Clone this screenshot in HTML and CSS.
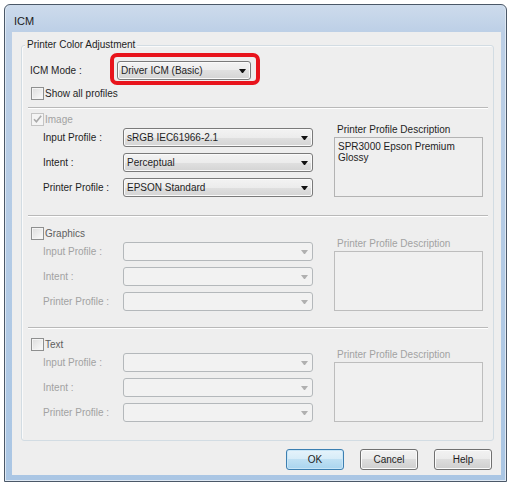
FILE: index.html
```html
<!DOCTYPE html>
<html lang="en">
<head>
    <meta charset="UTF-8">
    <title>ICM</title>
    <link rel="stylesheet" href="styles.css">
</head>
<body>
    <div class="window">
        <div class="titlebar">ICM</div>

        <div class="client">
            <div class="group">
                <span class="group-title">Printer Color Adjustment</span>

                <!-- Mode selector -->
                <div class="mode-row">
                    <span class="mode-label">ICM Mode :</span>
                    <span class="highlight">
                        <div class="combo mode-combo">Driver ICM (Basic)</div>
                    </span>
                </div>
                <div class="check-row">
                    <span class="check"></span>
                    <span>Show all profiles</span>
                </div>

                <div class="separator"></div>

                <!-- Image -->
                <div class="section section-image">
                    <div class="section-main">
                        <div class="check-row muted">
                            <span class="check check-disabled">
                                <svg width="11" height="11" viewBox="0 0 11 11"><path d="M2 5.2 L4.4 7.8 L9.2 1.8" fill="none" stroke="#a9a9a9" stroke-width="1.6"/></svg>
                            </span>
                            <span>Image</span>
                        </div>
                        <div class="field-row">
                            <span class="field-label">Input Profile :</span>
                            <div class="combo field-combo">sRGB IEC61966-2.1</div>
                        </div>
                        <div class="field-row">
                            <span class="field-label">Intent :</span>
                            <div class="combo field-combo">Perceptual</div>
                        </div>
                        <div class="field-row">
                            <span class="field-label">Printer Profile :</span>
                            <div class="combo field-combo">EPSON Standard</div>
                        </div>
                    </div>
                    <div class="desc">
                        <div class="desc-label">Printer Profile Description</div>
                        <div class="desc-box">SPR3000 Epson Premium<br>Glossy</div>
                    </div>
                </div>

                <div class="separator"></div>

                <!-- Graphics -->
                <div class="section section-graphics disabled">
                    <div class="section-main">
                        <div class="check-row">
                            <span class="check"></span>
                            <span class="head-label">Graphics</span>
                        </div>
                        <div class="field-row">
                            <span class="field-label">Input Profile :</span>
                            <div class="combo field-combo"></div>
                        </div>
                        <div class="field-row">
                            <span class="field-label">Intent :</span>
                            <div class="combo field-combo"></div>
                        </div>
                        <div class="field-row">
                            <span class="field-label">Printer Profile :</span>
                            <div class="combo field-combo"></div>
                        </div>
                    </div>
                    <div class="desc">
                        <div class="desc-label">Printer Profile Description</div>
                        <div class="desc-box"></div>
                    </div>
                </div>

                <div class="separator"></div>

                <!-- Text -->
                <div class="section section-text disabled">
                    <div class="section-main">
                        <div class="check-row">
                            <span class="check"></span>
                            <span class="head-label">Text</span>
                        </div>
                        <div class="field-row">
                            <span class="field-label">Input Profile :</span>
                            <div class="combo field-combo"></div>
                        </div>
                        <div class="field-row">
                            <span class="field-label">Intent :</span>
                            <div class="combo field-combo"></div>
                        </div>
                        <div class="field-row">
                            <span class="field-label">Printer Profile :</span>
                            <div class="combo field-combo"></div>
                        </div>
                    </div>
                    <div class="desc">
                        <div class="desc-label">Printer Profile Description</div>
                        <div class="desc-box"></div>
                    </div>
                </div>
            </div>

            <div class="buttons">
                <button class="btn btn-default">OK</button>
                <button class="btn">Cancel</button>
                <button class="btn">Help</button>
            </div>
        </div>
    </div>
</body>
</html>
```

FILE: styles.css
```css
body {
    margin: 0;
    background: #fff;
    font-family: "Liberation Sans", Arial, sans-serif;
    font-size: 10px;
    color: #1e1e1e;
}
.window {
    box-sizing: border-box;
    width: 503px;
    height: 478px;
    margin: 4px 0 0 4px;
    padding: 0 5px 6px 7px;
    border: 1px solid #4b5868;
    border-radius: 6px 6px 0 0;
    background: linear-gradient(to bottom, #cddbec 0, #bccfe6 28px, #aac6e4 100%);
    box-shadow: inset 1px 0 0 #dfe9f4, inset -1px 0 0 #dfe9f4, inset 0 -1px 0 #dfe9f4;
}
.titlebar {
    box-sizing: border-box;
    height: 27px;
    padding: 5px 0 0 2px;
    font-size: 11px;
    line-height: 22px;
    color: #1b1b1b;
}
.client {
    box-sizing: border-box;
    width: 489px;
    height: 443px;
    padding: 13px 7px 0 9px;
    background: #eeeeee;
}
.group {
    position: relative;
    padding: 15px 6px 0 8px;
    border: 1px solid #d2dce3;
    border-radius: 3px;
    box-shadow: inset 1px 1px 0 #fafafa;
}
.group-title {
    position: absolute;
    top: -7px;
    left: 3px;
    padding: 0 2px;
    line-height: 12px;
    background: #eeeeee;
}
.mode-row {
    display: flex;
    align-items: center;
    height: 19px;
}
.mode-label {
    width: 87px;
}
.highlight {
    position: relative;
}
.highlight::after {
    content: "";
    position: absolute;
    top: -8px;
    left: -7px;
    right: -9px;
    bottom: -5px;
    border: 4px solid #e8141c;
    border-radius: 7px;
}
.combo {
    position: relative;
    box-sizing: border-box;
    height: 19px;
    padding-left: 3px;
    border: 1px solid #7a7a7a;
    border-radius: 3px;
    line-height: 17px;
    background: linear-gradient(#f3f3f3, #ececec 50%, #e0e0e0 50%, #d4d4d4);
    box-shadow: inset 0 0 0 1px #fafafa;
}
.combo::after {
    content: "";
    position: absolute;
    right: 4px;
    top: 7px;
    width: 1px;
    border-top: 4px solid #111;
    border-left: 3px solid transparent;
    border-right: 3px solid transparent;
}
.mode-combo {
    width: 134px;
}
.field-combo {
    width: 190px;
}
.check-row {
    display: flex;
    align-items: center;
    height: 13px;
    margin-top: 7px;
}
.section .check-row {
    margin-top: 0;
}
.check {
    box-sizing: border-box;
    width: 13px;
    height: 13px;
    margin: 0 1px;
    border: 1px solid #8e8f8f;
    background: linear-gradient(135deg, #dcdcdc, #fbfbfb);
    box-shadow: inset 0 0 0 1px #f4f4f4;
}
.check svg {
    display: block;
}
.check-disabled {
    border-color: #c4c4c4;
    background: #f4f4f4;
}
.muted {
    color: #a2a2a2;
}
.separator {
    height: 1px;
    margin: 7px -1px 0 -2px;
    background: #b9b9b9;
    border-bottom: 1px solid #fff;
}
.section {
    display: flex;
}
.section-image {
    padding: 4px 0 18px;
}
.section-graphics {
    padding: 10px 0 16px;
}
.section-text {
    padding: 9px 0 18px;
}
.section + .separator {
    margin-top: 0;
}
.section-main {
    width: 283px;
}
.field-row {
    display: flex;
    align-items: center;
    height: 19px;
    margin-top: 6px;
    padding-left: 13px;
}
.check-row + .field-row {
    margin-top: 2px;
}
.field-label {
    width: 80px;
}
.desc {
    width: 149px;
    margin-left: 21px;
    padding-top: 11px;
}
.desc-label {
    padding-left: 3px;
    line-height: 11px;
}
.desc-box {
    box-sizing: border-box;
    height: 60px;
    margin-top: 2px;
    padding: 3px 3px;
    border: 1px solid #b3b3b3;
    line-height: 11px;
    background: #efefef;
}

/* disabled sections */
.disabled .head-label {
    color: #5e5e5e;
}
.disabled .field-label,
.disabled .desc-label {
    color: #a2a2a2;
}
.disabled .combo {
    border-color: #b4b8bb;
    background: #f2f2f2;
    box-shadow: none;
}
.disabled .combo::after {
    border-top-color: #b0b0b0;
}
.disabled .desc-box {
    border-color: #bdbdbd;
    background: #f0f0f0;
}

.buttons {
    display: flex;
    justify-content: flex-end;
    gap: 16px;
    margin: 8px 2px 0 0;
}
.btn {
    box-sizing: border-box;
    width: 58px;
    height: 21px;
    padding: 0;
    border: 1px solid #707070;
    border-radius: 3px;
    font: inherit;
    color: #1e1e1e;
    background: linear-gradient(#f2f2f2, #ebebeb 50%, #dddddd 50%, #cfcfcf);
    box-shadow: inset 0 0 0 1px #fbfbfb;
}
.btn-default {
    border-color: #3c7fb1;
    background: linear-gradient(#e5f3fb, #d6ecf8 50%, #bfe0f3 50%, #a9d4ee);
    box-shadow: inset 0 0 0 1px #c9e6f7;
}
```
